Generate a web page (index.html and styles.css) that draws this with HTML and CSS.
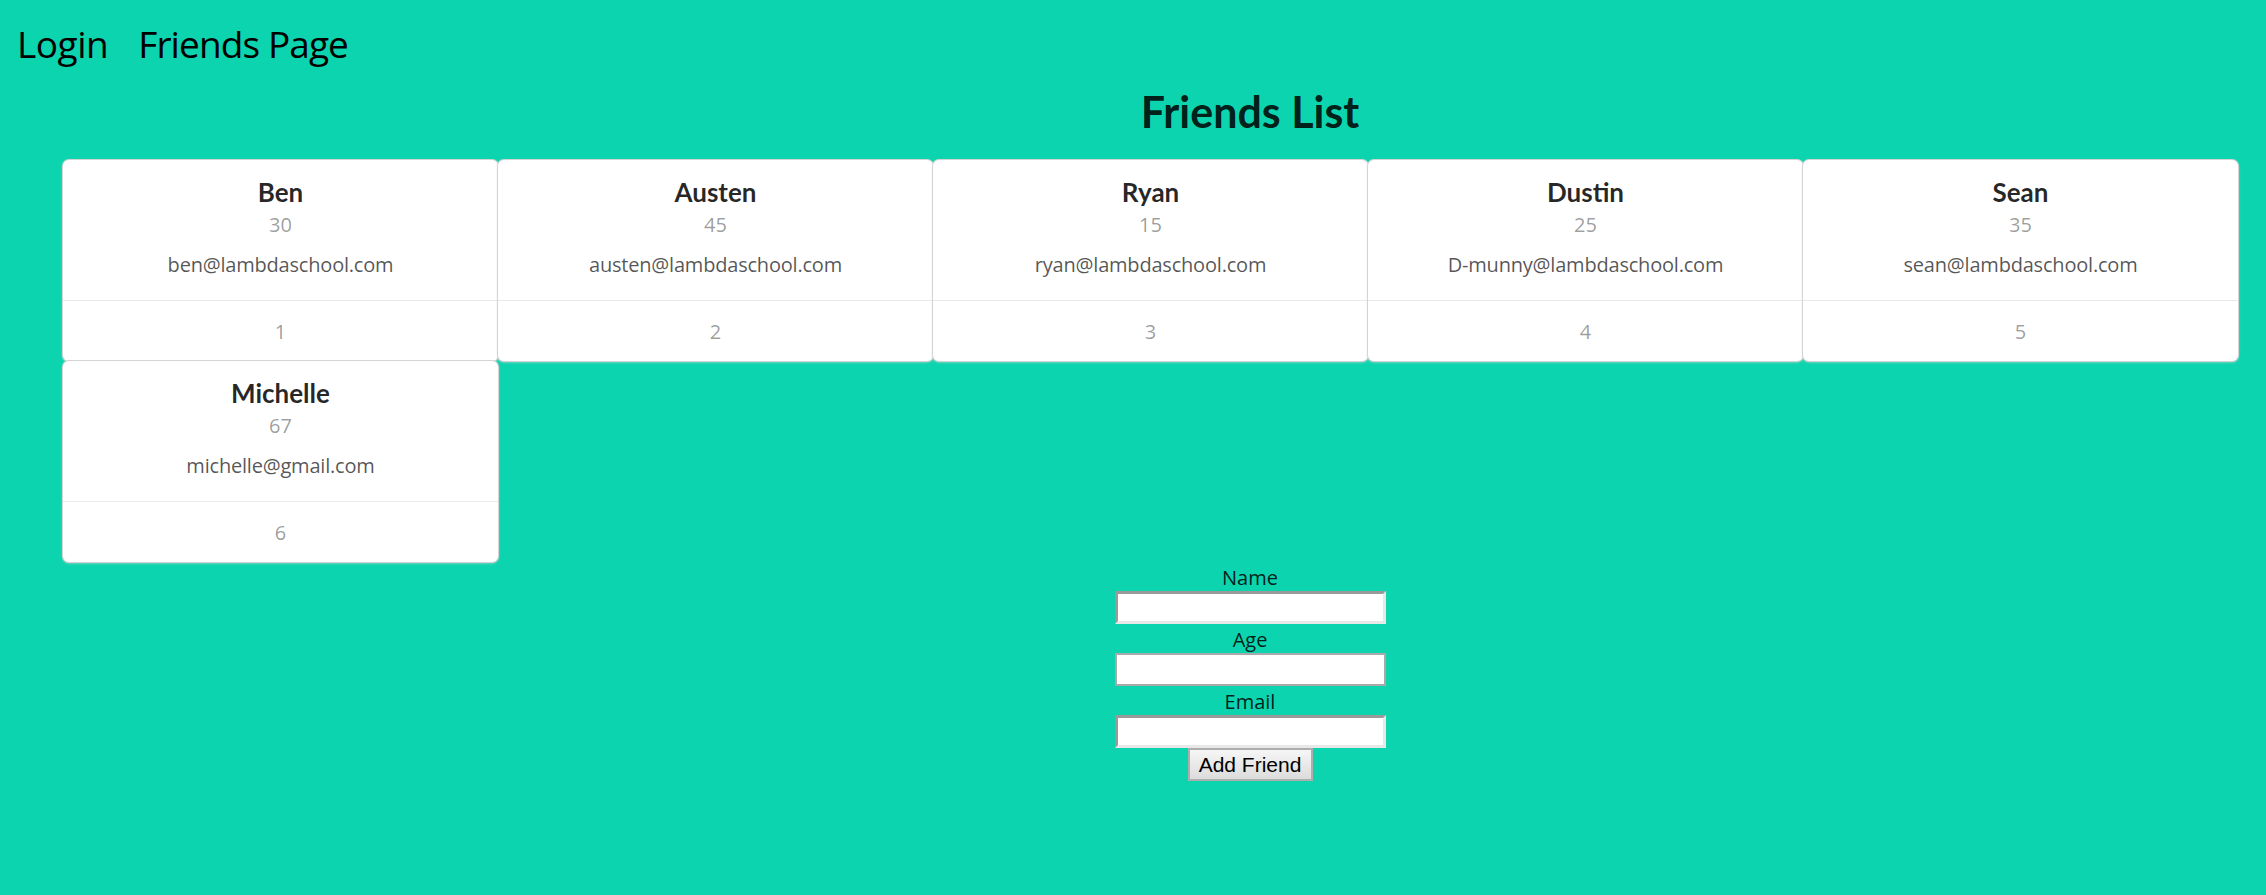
FILE: index.html
```html
<!DOCTYPE html>
<html lang="en">
<head>
<meta charset="utf-8">
<title>Friends</title>
<link rel="stylesheet" href="styles.css">
</head>
<body>
<div class="app">
  <nav class="nav">
    <a class="nav-link" href="#">Login</a>
    <a class="nav-link narrow" href="#">Friends Page</a>
  </nav>
  <h1 class="title">Friends List</h1>
  <div class="cards">
    <div class="card">
      <div class="content">
        <div class="header">Ben</div>
        <div class="meta">30</div>
        <div class="description">ben@lambdaschool.com</div>
      </div>
      <div class="extra">1</div>
    </div>
    <div class="card">
      <div class="content">
        <div class="header">Austen</div>
        <div class="meta">45</div>
        <div class="description">austen@lambdaschool.com</div>
      </div>
      <div class="extra">2</div>
    </div>
    <div class="card">
      <div class="content">
        <div class="header">Ryan</div>
        <div class="meta">15</div>
        <div class="description">ryan@lambdaschool.com</div>
      </div>
      <div class="extra">3</div>
    </div>
    <div class="card">
      <div class="content">
        <div class="header">Dustin</div>
        <div class="meta">25</div>
        <div class="description">D-munny@lambdaschool.com</div>
      </div>
      <div class="extra">4</div>
    </div>
    <div class="card">
      <div class="content">
        <div class="header">Sean</div>
        <div class="meta">35</div>
        <div class="description">sean@lambdaschool.com</div>
      </div>
      <div class="extra">5</div>
    </div>
    <div class="card">
      <div class="content">
        <div class="header">Michelle</div>
        <div class="meta">67</div>
        <div class="description">michelle@gmail.com</div>
      </div>
      <div class="extra">6</div>
    </div>
  </div>
  <form class="form">
    <label class="label">Name</label>
    <input class="input inset" type="text">
    <label class="label">Age</label>
    <input class="input plain" type="text">
    <label class="label">Email</label>
    <input class="input inset" type="text">
    <button class="button" type="button">Add Friend</button>
  </form>
</div>
</body>
</html>
```
FILE: styles.css
```css
html, body {
  margin: 0;
  padding: 0;
  background: #0bd4ae;
}

.app {
  font-family: "Open Sans", "Noto Sans", sans-serif;
  color: rgba(0, 0, 0, 0.87);
}

.nav {
  display: flex;
  gap: 30px;
  padding: 19px 0 0 17px;
  height: 49px;
}

.nav-link {
  font-family: "Open Sans", sans-serif;
  font-size: 37px;
  line-height: 50px;
  color: #000;
  text-decoration: none;
  letter-spacing: -0.5px;
}

.nav-link.narrow {
  letter-spacing: -0.9px;
}

.title {
  margin: 19px 0 23px;
  padding-left: 234px;
  font-family: "Lato", sans-serif;
  font-weight: 700;
  font-size: 43px;
  line-height: 50px;
  text-align: center;
  color: rgba(0, 0, 0, 0.87);
}

.cards {
  display: flex;
  flex-wrap: wrap;
  padding-left: 63px;
}

.card {
  flex: 0 0 435px;
  background: #fff;
  border-radius: 6px;
  box-shadow: 0 1px 3px 0 #d4d4d5, 0 0 0 1px #d4d4d5;
  text-align: center;
}

.content {
  padding: 18px 20px 20px;
}

.header {
  font-family: "Lato", sans-serif;
  font-weight: 700;
  font-size: 26px;
  line-height: 29px;
  color: rgba(0, 0, 0, 0.85);
}

.meta {
  font-size: 20px;
  line-height: 36px;
  color: rgba(0, 0, 0, 0.4);
}

.description {
  margin-top: 7px;
  font-size: 20px;
  line-height: 30px;
  color: rgba(0, 0, 0, 0.68);
  letter-spacing: -0.2px;
}

.extra {
  border-top: 1px solid rgba(34, 36, 38, 0.1);
  padding: 16px 20px 14px;
  font-size: 20px;
  line-height: 30px;
  color: rgba(0, 0, 0, 0.4);
}

.form {
  display: flex;
  flex-direction: column;
  align-items: center;
  padding-left: 234px;
}

.label {
  display: block;
  padding-top: 2px;
  height: 27px;
  font-size: 20px;
  line-height: 27px;
  color: rgba(0, 0, 0, 0.87);
}

.input {
  box-sizing: border-box;
  width: 271px;
  height: 33px;
  margin: 0;
  padding: 0 4px;
  background: #fff;
  font-size: 18px;
}

.input.inset {
  border-width: 3px;
  border-style: solid;
  border-color: #9a9a9a #e8e8e8 #e8e8e8 #9a9a9a;
}

.input.plain {
  border: 2px solid #a9a9a9;
}

.button {
  box-sizing: border-box;
  width: 125px;
  height: 33px;
  margin: 0;
  padding: 0;
  border: 2px solid #adadad;
  background: linear-gradient(#f6f6f6, #dcdcdc);
  font-family: "Liberation Sans", Arial, sans-serif;
  font-size: 21px;
  color: #000;
}
```
